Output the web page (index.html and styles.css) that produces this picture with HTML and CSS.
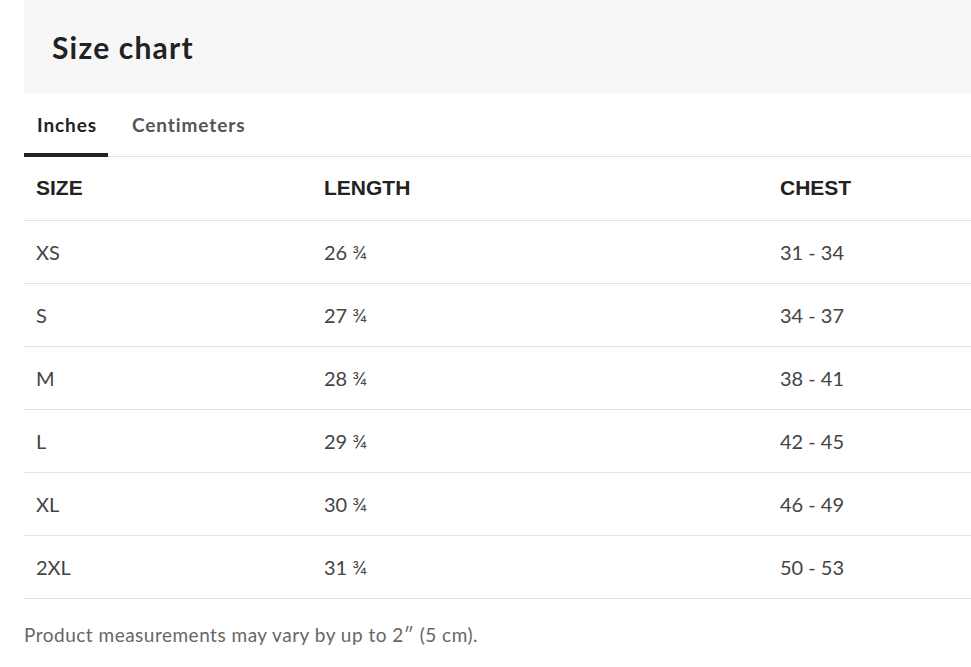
FILE: index.html
```html
<!DOCTYPE html>
<html>
<head>
<meta charset="utf-8">
<link rel="stylesheet" href="styles.css">
</head>
<body>
<div class="panel">
  <header class="head"><h1 class="title">Size chart</h1></header>
  <nav class="tabs">
    <span class="tab active">Inches</span>
    <span class="tab">Centimeters</span>
  </nav>
  <table class="chart">
    <thead>
      <tr><th class="c1">SIZE</th><th class="c2">LENGTH</th><th class="c3">CHEST</th></tr>
    </thead>
    <tbody>
      <tr><td>XS</td><td>26 ¾</td><td>31 - 34</td></tr>
      <tr><td>S</td><td>27 ¾</td><td>34 - 37</td></tr>
      <tr><td>M</td><td>28 ¾</td><td>38 - 41</td></tr>
      <tr><td>L</td><td>29 ¾</td><td>42 - 45</td></tr>
      <tr><td>XL</td><td>30 ¾</td><td>46 - 49</td></tr>
      <tr><td>2XL</td><td>31 ¾</td><td>50 - 53</td></tr>
    </tbody>
  </table>
  <p class="note">Product measurements may vary by up to 2″ (5 cm).</p>
</div>
</body>
</html>
```
FILE: styles.css
```css
html, body { margin: 0; padding: 0; background: #fff; overflow: hidden; }
body { font-family: Lato, "Open Sans", sans-serif; color: #222; }
.panel { margin-left: 24px; }
.head { background: #f7f7f7; height: 93px; display: flex; align-items: center; padding-left: 28px; }
.title { margin: 0; font-size: 30px; font-weight: 700; color: #222; letter-spacing: 1.2px; }
.tabs { display: flex; height: 64px; border-bottom: 1px solid #e3e3e3; padding-top: 3px; box-sizing: border-box; }
.tab { font-size: 19px; font-weight: 700; color: #555; letter-spacing: 0.9px; display: flex; align-items: center; padding: 0 11px 0 13px; margin-right: 11px; border-bottom: 4px solid transparent; margin-bottom: -1px; box-sizing: border-box; }
.tab.active { color: #222; border-bottom-color: #222; }
.chart { border-collapse: collapse; width: 947px; table-layout: fixed; }
.chart th, .chart td { text-align: left; padding: 0 0 0 12px; height: 63px; border-bottom: 1px solid #e3e3e3; box-sizing: border-box; }
.chart th { font-family: "Liberation Sans", Arial, sans-serif; font-weight: 700; font-size: 21px; color: #222; }
.chart td { font-size: 20px; color: #444; }
.c1 { width: 288px; }
.c2 { width: 456px; }
.note { margin: 24px 0 0; font-size: 19px; color: #666; letter-spacing: 0.5px; }
```
